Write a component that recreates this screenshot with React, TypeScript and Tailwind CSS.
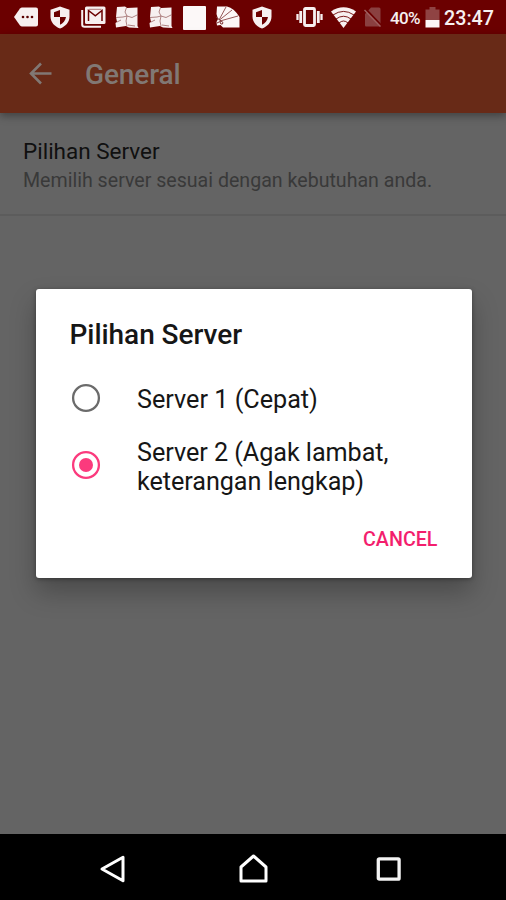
import React from "react";

function MessageIcon({ className }: { className: string }) {
  return (
    <svg className={className} width="24" height="20" viewBox="0 0 24 20">
      <path d="M0 10 L6 1.5 Q7 .5 8 .5 H22 Q24 .5 24 2.5 V17.5 Q24 19.500 22 19.500 H8 Q7 19.500 6 18.500Z" fill="#f7f0f0" />
      <g fill="#5a0000"><circle cx="9" cy="10" r="1.300" /><circle cx="13.500" cy="10" r="1.300" /><circle cx="18" cy="10" r="1.300" /></g>
    </svg>
  );
}

function ShieldIcon({ className }: { className: string }) {
  return (
    <svg className={className} width="20" height="23" viewBox="0 0 20 24" preserveAspectRatio="none">
      <path d="M10 .5 L19.500 4 V11 C19.500 17 15.500 21.500 10 23.500 C4.500 21.500 .5 17 .5 11 V4Z" fill="#f7f0f0" />
      <path d="M10 4.200 V11.500 H4 V6.500Z M10 11.500 H16 C15.500 15.500 13 18 10 19.500Z" fill="#6b0000" />
    </svg>
  );
}

function MailIcon({ className }: { className: string }) {
  return (
    <svg className={className} width="25" height="22" viewBox="0 0 25 22">
      <path d="M1.200 4 V18.500 Q1.200 20.800 3.500 20.800 H20" fill="none" stroke="#f7f0f0" strokeWidth="2" />
      <rect x="4" y=".5" width="20.500" height="17.500" rx="1.500" fill="#f7f0f0" />
      <path d="M7.500 15 V4.500 L14.300 9.800 L21 4.500 V15" fill="none" stroke="#6b0000" strokeWidth="1.500" />
      <path d="M8 3.300 H20.500" stroke="#b07878" strokeWidth="1" />
    </svg>
  );
}

function PanesIcon({ className }: { className: string }) {
  return (
    <svg className={className} width="24" height="23" viewBox="0 0 24 23">
      <path d="M2 1 L10 .5 L12 2 L22.500 1.500 V20 L23.500 22 L14 21.500 L11 20 L1 21.500 L.5 17 L2 16 L1 11Z" fill="#f7f0f0" />
      <path d="M11.500 1.500 L10 6 L12 10 L11 15 L12 20 M1 11.500 L8 11 L12 10 L17 11.500 L23 8.500 M2 16 L6 14 M13 19 L20 20" fill="none" stroke="#9c6666" strokeWidth=".8" />
    </svg>
  );
}

function FanIcon({ className }: { className: string }) {
  return (
    <svg className={className} width="24" height="24" viewBox="0 0 24 24">
      <path d="M1 1.500 H11 Q18 3 23.500 12 V22.500 H7 L4.500 20 L1 20.500 L.5 17 L2 14 L.5 9Z" fill="#fcf8f8" />
      <path d="M3 15 L10 2 M3.500 15 L16 5 M4 16 L22 11" fill="none" stroke="#965858" strokeWidth="1" />
      <path d="M0 12 L5 16 L1 18 M5 16 Q8 17 6.500 19 Q4.500 20 4 17" fill="none" stroke="#7d3434" strokeWidth="1" />
    </svg>
  );
}

function VibrateIcon({ className }: { className: string }) {
  return (
    <svg className={className} width="27" height="20" viewBox="0 0 27 20" fill="none" stroke="#f7f0f0">
      <rect x="8.500" y="1.500" width="10" height="17" rx="1" strokeWidth="2.800" />
      <path d="M4.700 4 V16 M22.300 4 V16" strokeWidth="2.800" />
      <path d="M1.500 7 V13 M25.500 7 V13" strokeWidth="2.300" />
    </svg>
  );
}

function WifiIcon({ className }: { className: string }) {
  return (
    <svg className={className} width="25" height="21" viewBox="0 0 25 21">
      <path d="M0 4.500 Q12.500 -3.800 25 4.500 L12.500 21Z" fill="#f7f0f0" />
      <path d="M2 8 Q12.500 .8 23 8 M5 12 Q12.500 6.500 20 12 M8 16 Q12.500 12 17 16" fill="none" stroke="#6b0000" strokeWidth=".9" />
    </svg>
  );
}

function NoSimIcon({ className }: { className: string }) {
  return (
    <svg className={className} width="18" height="20" viewBox="0 0 18 20">
      <path d="M1 7 L7 .5 H15 Q16.500 .5 16.500 2 V19.500 H2 Q1 19.500 1 18Z" fill="#8a4040" />
      <path d="M1 1.500 L18 19.500" stroke="#6b0000" strokeWidth="2.400" />
      <path d="M.5 3 L16.500 19.500" stroke="#a06060" strokeWidth="1.400" />
    </svg>
  );
}

function StatusBar() {
  return (
    <header className="flex h-[34px] shrink-0 items-center bg-[#6b0000] pl-[14px] text-[#f7f0f0]">
      <MessageIcon className="shrink-0" />
      <ShieldIcon className="ml-[12px] shrink-0" />
      <MailIcon className="ml-[11px] shrink-0" />
      <PanesIcon className="ml-[9px] shrink-0" />
      <PanesIcon className="ml-[10px] shrink-0" />
      <div className="mt-px ml-[10px] h-[24px] w-[23px] shrink-0 rounded-[1px] bg-[#fcf8f8]" />
      <FanIcon className="ml-[10px] shrink-0" />
      <ShieldIcon className="ml-[12px] shrink-0" />
      <VibrateIcon className="ml-[24px] shrink-0" />
      <WifiIcon className="ml-[8px] shrink-0" />
      <NoSimIcon className="ml-[8px] shrink-0" />
      <span className="ml-[8px] mt-[3px] w-[34px] shrink-0 whitespace-nowrap text-[17px] font-medium tracking-[-0.6px]">40%</span>
      <svg className="ml-px shrink-0" width="15" height="21" viewBox="0 0 15 21">
        <path d="M4.500 0 H10.500 V2.500 H14.500 V13 H.5 V2.500 H4.500Z" fill="#8f4343" />
        <path d="M.5 13 H14.500 V20.500 H.5Z" fill="#fcf8f8" />
      </svg>
      <span className="ml-[4px] mt-[3px] shrink-0 whitespace-nowrap text-[19.700px] font-medium">23:47</span>
    </header>
  );
}

function Radio({ checked }: { checked: boolean }) {
  const color = checked ? "#fb3a7d" : "#6b6b6b";
  return (
    <svg className="shrink-0" width="30" height="30" viewBox="0 0 30 30">
      <circle cx="15" cy="15" r="12.900" fill="none" stroke={color} strokeWidth="2.300" />
      {checked && <circle cx="15" cy="15" r="7" fill={color} />}
    </svg>
  );
}

function ServerDialog() {
  return (
    <div
      role="dialog"
      className="absolute left-[35.500px] top-[289px] flex h-[289px] w-[436px] flex-col rounded-[3px] bg-white pl-[34px] text-[#161616] shadow-[0_14px_26px_rgba(0,0,0,0.26),0_1px_4px_rgba(0,0,0,0.35)]"
    >
      <h2 className="mt-[29px] h-[34px] whitespace-nowrap text-[28px] font-medium leading-[34px] tracking-[-0.05px]">Pilihan Server</h2>
      <label className="mt-[22px] flex h-[48px] items-center gap-[36px] pl-[1.500px]">
        <Radio checked={false} />
        <span className="mt-[2px] whitespace-nowrap text-[25.200px] leading-[29px]">Server 1 (Cepat)</span>
      </label>
      <label className="mt-[13px] flex h-[60px] items-center gap-[36px] pl-[1.500px]">
        <Radio checked />
        <span className="mt-[3px] whitespace-nowrap text-[25.200px] leading-[29px] tracking-[-0.05px]">
          Server 2 (Agak lambat,
          <br />
          keterangan lengkap)
        </span>
      </label>
      <button className="mr-[34px] mt-[31px] self-end text-[19.700px] font-medium leading-[28px] text-[#f31e6d]">CANCEL</button>
    </div>
  );
}

function NavigationBar() {
  return (
    <nav className="flex h-[66px] shrink-0 items-center bg-black pl-[99px] pt-[4px]">
      <svg width="28" height="32" viewBox="0 0 28 32" fill="none" stroke="#fff" strokeWidth="3" strokeLinejoin="round">
        <path d="M3 16 L24 4.300 V27.700Z" />
      </svg>
      <svg className="ml-[111px]" width="30" height="32" viewBox="0 0 30 32" fill="none" stroke="#fff" strokeWidth="3" strokeLinejoin="round">
        <path d="M3 28 V14 L15.500 3 L28 14 V28Z" />
      </svg>
      <svg className="ml-[108px]" width="26" height="26" viewBox="0 0 26 26" fill="none" stroke="#f4f4f4" strokeWidth="3.300">
        <rect x="2.300" y="2.800" width="20.800" height="20.400" rx="1" />
      </svg>
    </nav>
  );
}

export default function App() {
  return (
    <div className="relative flex h-[900px] w-[506px] flex-col overflow-hidden bg-[#646464] font-[Roboto,'Liberation_Sans',sans-serif]">
      <StatusBar />
      <div className="z-0 flex h-[79px] shrink-0 items-center bg-[#682a17] pl-[28px] text-[#817874] shadow-[0_3px_8px_rgba(0,0,0,0.35)]">
        <svg width="24" height="23" viewBox="0 0 24 23" fill="none" stroke="currentColor" strokeWidth="2.600">
          <path d="M23.500 11.500 H3 M13 1.500 L3 11.500 L13 21.500" />
        </svg>
        <h1 className="ml-[33px] mt-[3px] text-[28px] font-medium tracking-[-0.1px]">General</h1>
      </div>
      <main className="flex-1">
        <section className="flex h-[103px] flex-col border-b-2 border-[#5c5c5c] pl-[23px] pt-[24px]">
          <h3 className="whitespace-nowrap text-[22.500px] leading-[28px] text-[#101010]">Pilihan Server</h3>
          <p className="mt-[3px] whitespace-nowrap text-[19.600px] leading-[25px] text-[#393939]">Memilih server sesuai dengan kebutuhan anda.</p>
        </section>
      </main>
      <NavigationBar />
      <ServerDialog />
    </div>
  );
}
